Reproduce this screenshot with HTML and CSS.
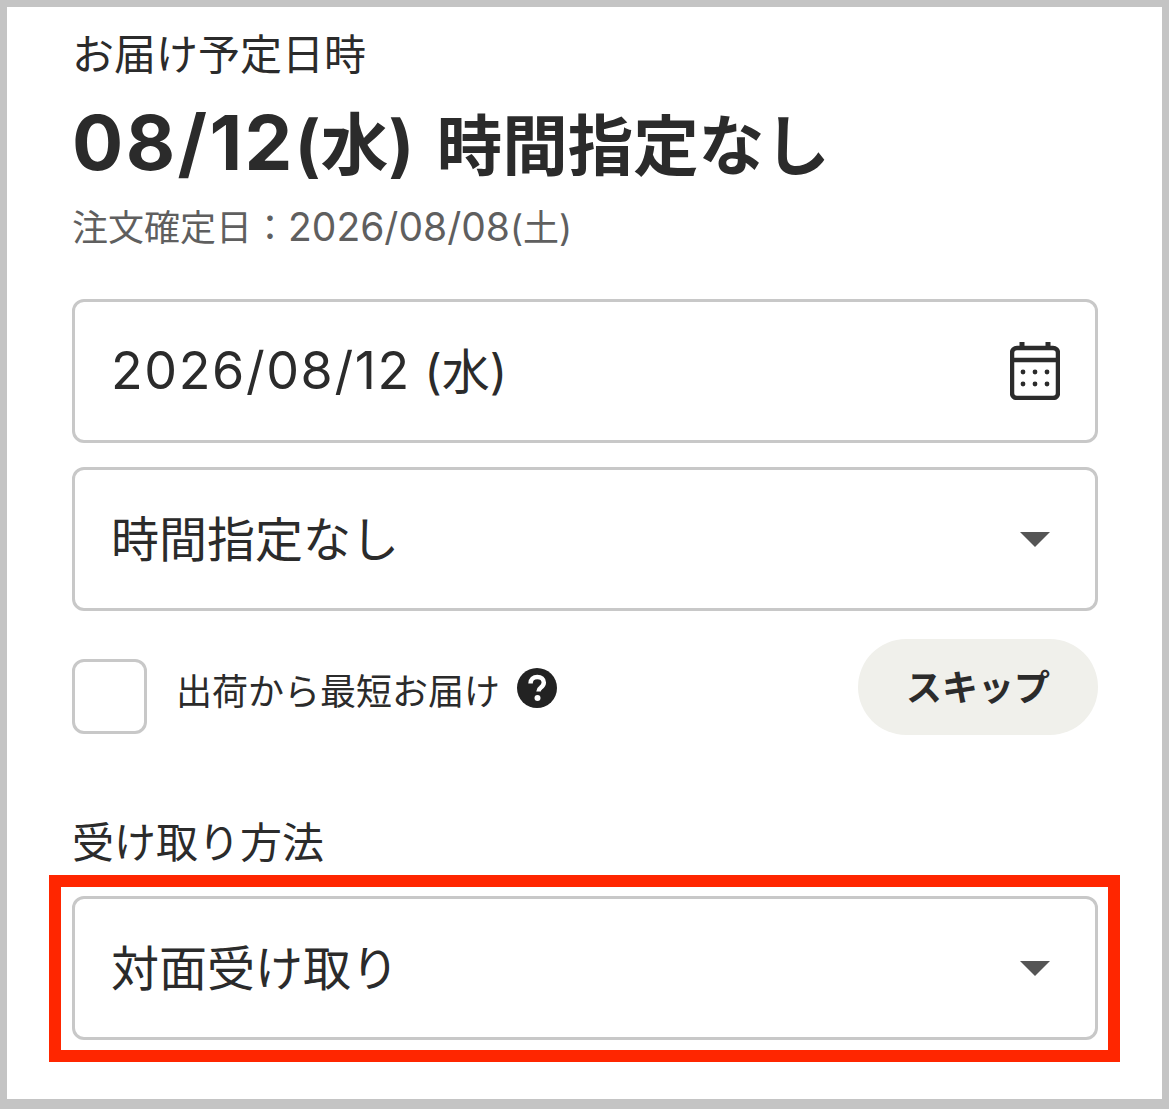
FILE: index.html
```html
<!DOCTYPE html>
<html lang="ja">
<head>
  <meta charset="UTF-8" />
  <title>お届け予定日時</title>
  <link rel="stylesheet" href="styles.css">
</head>
<body>
  <div class="frame">
    <div class="label">お届け予定日時</div>
    <div class="delivery-date"><span class="title-num">08/12</span><span class="title-day">(水)</span> 時間指定なし</div>
    <div class="order-date">注文確定日：<span class="order-num">2026/08/08</span>(土)</div>

    <div class="field field-date">
      <span><span class="field-num">2026/08/12</span> (水)</span>
      <svg class="calendar" viewBox="0 0 50 58">
        <rect x="2" y="6" width="46" height="50" rx="5" fill="none" stroke="#2b2b2b" stroke-width="4.500" />
        <path d="M2 18h46" stroke="#2b2b2b" stroke-width="4.500" />
        <path d="M12 0v8M38 0v8" stroke="#2b2b2b" stroke-width="5" />
        <g fill="#2b2b2b">
          <circle cx="13" cy="30" r="2.400" /><circle cx="25" cy="30" r="2.400" /><circle cx="37" cy="30" r="2.400" />
          <circle cx="13" cy="42" r="2.400" /><circle cx="25" cy="42" r="2.400" /><circle cx="37" cy="42" r="2.400" />
        </g>
      </svg>
    </div>

    <div class="field field-time">
      <span>時間指定なし</span>
      <i class="caret"></i>
    </div>

    <div class="option-row">
      <div class="checkbox"></div>
      <span class="option-text">出荷から最短お届け</span>
      <svg class="help" viewBox="0 0 40 40">
        <circle cx="20" cy="20" r="20" fill="#222" />
        <path d="M13.500 15.500c0-4 3-6.500 6.800-6.500 3.800 0 6.500 2.300 6.500 5.600 0 2.600-1.400 3.900-3.200 5.200-1.600 1.100-2.100 1.800-2.100 3.700" fill="none" stroke="#fff" stroke-width="4.500" />
        <circle cx="20.500" cy="30" r="3" fill="#fff" />
      </svg>
      <button class="skip">スキップ</button>
    </div>

    <div class="label label-method">受け取り方法</div>
    <div class="highlight">
      <div class="field">
        <span>対面受け取り</span>
        <i class="caret"></i>
      </div>
    </div>
  </div>
</body>
</html>
```

FILE: styles.css
```css
* {
  margin: 0;
  padding: 0;
  box-sizing: border-box;
}
body {
  background: #fff;
  color: #2b2b2b;
  font-family: Inter, "Noto Sans CJK JP", sans-serif;
}

/* outer grey frame */
.frame {
  height: 1109px;
  border: solid #c4c4c4;
  border-width: 7px 7px 10px 7px;
  padding: 23px 64px 0 65px;
}

.label {
  font-size: 42px;
  line-height: 50px;
}
.delivery-date {
  margin-top: 23px;
  font-size: 65.500px;
  line-height: 88px;
  font-weight: 700;
}
/* latin digits run larger than the kana next to them */
.title-num {
  font-size: 76px;
  line-height: 0;
  letter-spacing: 2.400px;
}
.title-day {
  font-size: 68px;
  line-height: 0;
  margin-right: 7px;
}
.order-date {
  margin-top: 12px;
  font-size: 36px;
  line-height: 50px;
  color: #5f5f5f;
}
.order-num {
  font-size: 39px;
  line-height: 0;
}

/* inputs */
.field {
  height: 144px;
  display: flex;
  align-items: center;
  justify-content: space-between;
  padding: 0 45px 6px 36px;
  border: 3px solid #c8c8c8;
  border-radius: 12px;
  font-size: 48px;
}
.field-date {
  margin-top: 46px;
  padding-right: 35px;
}
.field-num {
  font-size: 52px;
  letter-spacing: 1.600px;
}
.field-time {
  margin-top: 24px;
}
.calendar {
  width: 50px;
  height: 58px;
  margin-top: 6px;
}
.caret {
  width: 0;
  height: 0;
  margin-top: 7px;
  border-left: 15px solid transparent;
  border-right: 15px solid transparent;
  border-top: 15px solid #555;
}

/* checkbox row */
.option-row {
  margin-top: 28px;
  display: flex;
  align-items: center;
}
.checkbox {
  width: 75px;
  height: 75px;
  margin-top: 19px;
  border: 3px solid #c8c8c8;
  border-radius: 12px;
}
.option-text {
  margin-left: 29px;
  margin-top: 3px;
  font-size: 36px;
}
.help {
  margin-left: 17px;
  margin-top: 2px;
  width: 40px;
  height: 40px;
}
.skip {
  margin-left: auto;
  width: 240px;
  height: 96px;
  padding-bottom: 4px;
  border: none;
  border-radius: 48px;
  background: #f0f0eb;
  color: #2b2b2b;
  font-family: inherit;
  font-size: 36px;
  font-weight: 700;
}

.label-method {
  margin-top: 83px;
}

/* red highlight round the last select */
.highlight {
  margin: 7px -22px 0 -23px;
  padding: 9px 10px 10px 11px;
  border: 12px solid #ff2600;
}
```
